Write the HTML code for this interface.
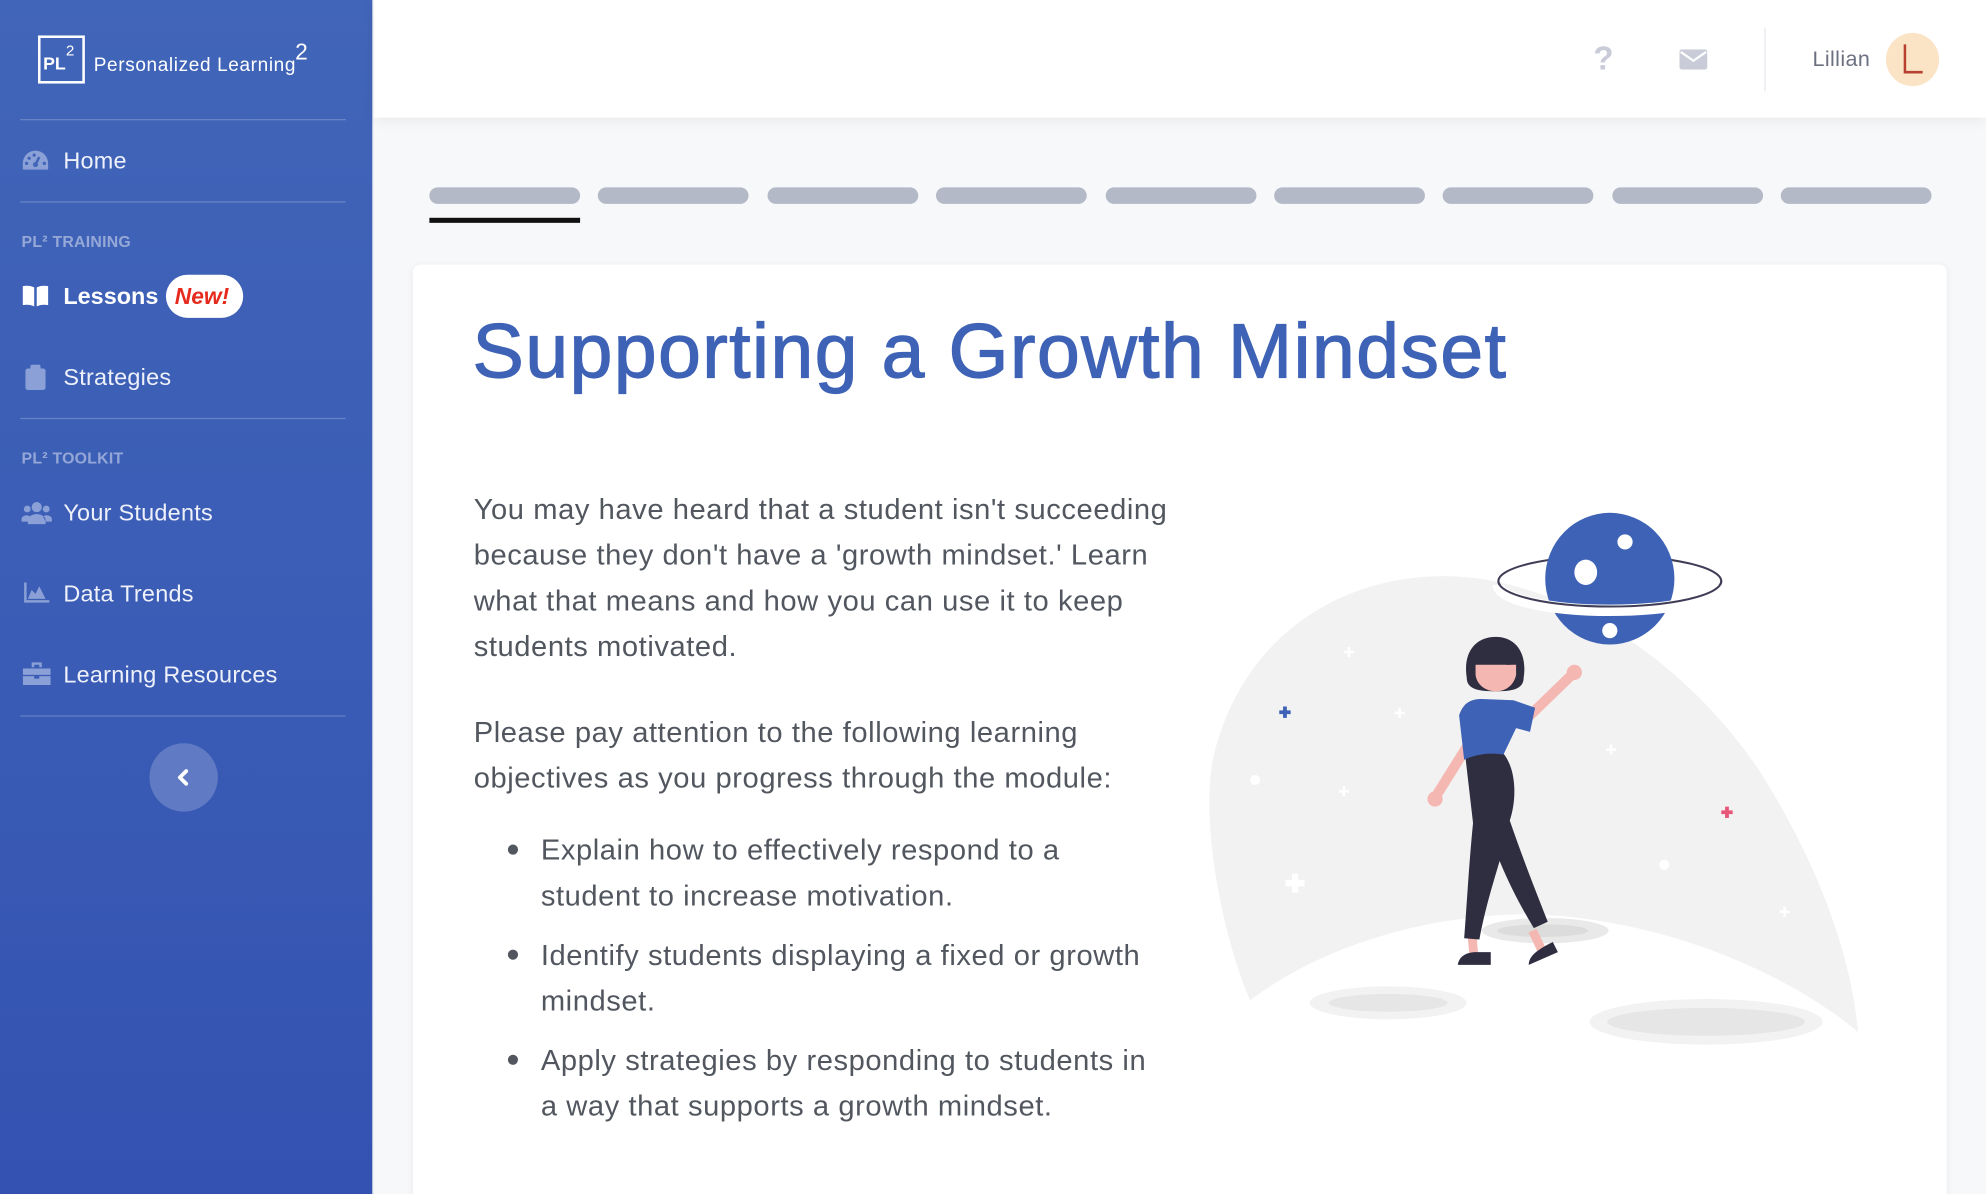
<!DOCTYPE html>
<html><head><meta charset="utf-8">
<style>
html,body{margin:0;padding:0;width:1986px;height:1194px;overflow:hidden;background:#f7f8fa;}
#w{position:absolute;left:0;top:0;width:1568px;height:943px;transform:scale(1.26658,1.2662);transform-origin:0 0;font-family:"Liberation Sans",sans-serif;background:#f7f8fa;overflow:hidden;}
.abs{position:absolute;}
#side{left:0;top:0;width:294px;height:943px;background:linear-gradient(180deg,#4165b8 0%,#3b5db6 50%,#3452b1 100%);border-right:1px solid #e8eaf0;}
.hr{position:absolute;left:16px;width:257px;height:1px;background:rgba(255,255,255,0.22);}
.nav{position:absolute;left:50px;font-size:18.5px;color:#eef1fa;line-height:20px;letter-spacing:0.2px;}
.ico{position:absolute;left:17px;}
.sec{position:absolute;left:17px;font-size:12.5px;font-weight:bold;color:rgba(255,255,255,0.45);letter-spacing:0.2px;}
#hdr{left:295px;top:0;width:1273px;height:93px;background:#fff;box-shadow:0 3px 10px rgba(0,0,0,0.06);}
.bar{position:absolute;top:148px;width:119px;height:13px;border-radius:7px;background:#b3b9c6;}
#card{left:326px;top:209px;width:1211px;height:760px;background:#fff;border-radius:6px;box-shadow:0 1px 6px rgba(0,0,0,0.06);}
.p{position:absolute;left:374px;font-size:23px;letter-spacing:0.45px;line-height:36px;color:#52575f;}
.dot{position:absolute;left:401px;width:8px;height:8px;border-radius:50%;background:#52575f;}
</style></head><body>
<div id="w">
<div id="side" class="abs">
  <div class="abs" style="left:30px;top:28px;width:33px;height:34px;border:2px solid #fff;"></div>
  <div class="abs" style="left:34px;top:42px;font-size:14px;font-weight:bold;color:#fff;">PL</div>
  <div class="abs" style="left:52px;top:33px;font-size:12px;color:#fff;">2</div>
  <div class="abs" style="left:74px;top:43px;font-size:15px;letter-spacing:0.5px;color:#fff;">Personalized Learning</div>
  <div class="abs" style="left:233px;top:31px;font-size:18px;color:#fff;">2</div>
  <div class="hr" style="top:94px"></div>
  <svg class="ico" style="top:118px" width="22" height="18" viewBox="0 0 22 18"><path d="M11 1A10 10 0 0 0 1 11v5h20v-5A10 10 0 0 0 11 1z" fill="#8aa0d6"/><path d="M11 12l3-6" stroke="#4165b8" stroke-width="2"/><circle cx="11" cy="12" r="2" fill="#4165b8"/><circle cx="6" cy="7" r="1.3" fill="#4165b8"/><circle cx="4" cy="11" r="1.3" fill="#4165b8"/><circle cx="10" cy="4.5" r="1.3" fill="#4165b8"/><circle cx="18" cy="11" r="1.3" fill="#4165b8"/></svg>
  <div class="nav" style="top:117px">Home</div>
  <div class="hr" style="top:159px"></div>
  <div class="sec" style="top:184px">PL² TRAINING</div>
  <svg class="ico" style="top:225px" width="22" height="18" viewBox="0 0 22 18"><path d="M1 1q5-1 9 1v15q-4-2-9-1z M12 2q4-2 9-1v15q-5-1-9 1z" fill="#fff"/></svg>
  <div class="nav" style="top:224px;font-weight:bold;color:#fff;letter-spacing:0;">Lessons</div>
  <div class="abs" style="left:131px;top:217px;width:61px;height:34px;border-radius:17px;background:#fff;"></div>
  <div class="abs" style="left:138px;top:224px;font-size:18px;font-weight:bold;font-style:italic;color:#e62b1e;">New!</div>
  <svg class="ico" style="top:288px;left:20px" width="16" height="20" viewBox="0 0 16 20"><rect x="0" y="3" width="16" height="17" rx="2" fill="#8aa0d6"/><rect x="4" y="0" width="8" height="5" rx="1.5" fill="#8aa0d6"/></svg>
  <div class="nav" style="top:288px">Strategies</div>
  <div class="hr" style="top:330px"></div>
  <div class="sec" style="top:355px">PL² TOOLKIT</div>
  <svg class="ico" style="top:396px" width="24" height="18" viewBox="0 0 24 18"><circle cx="12" cy="4.5" r="4" fill="#8aa0d6"/><circle cx="4.5" cy="6" r="2.7" fill="#8aa0d6"/><circle cx="19.5" cy="6" r="2.7" fill="#8aa0d6"/><path d="M5 18v-3a7 5 0 0 1 14 0v3z M0 14a4 3 0 0 1 7-2l-2 4H0z M24 14a4 3 0 0 0-7-2l2 4h5z" fill="#8aa0d6"/></svg>
  <div class="nav" style="top:395px">Your Students</div>
  <svg class="ico" style="top:460px;left:19px" width="20" height="16" viewBox="0 0 20 16"><path d="M0 0h2v14h18v2H0z M3 13l3-7 3 3 3-6 5 10z" fill="#8aa0d6"/></svg>
  <div class="nav" style="top:459px">Data Trends</div>
  <svg class="ico" style="top:523px;left:18px" width="22" height="18" viewBox="0 0 22 18"><path d="M7 0h8v4h-2V2H9v2H7z M0 5h22v5H0z M0 11h9v2h4v-2h9v7H0z" fill="#8aa0d6"/></svg>
  <div class="nav" style="top:523px">Learning Resources</div>
  <div class="hr" style="top:565px"></div>
  <div class="abs" style="left:118px;top:587px;width:54px;height:54px;border-radius:50%;background:rgba(255,255,255,0.2);"></div>
  <svg class="abs" style="left:139px;top:607px" width="12" height="14" viewBox="0 0 12 14"><path d="M8 2L3 7l5 5" stroke="#fff" stroke-width="3" fill="none" stroke-linecap="round" stroke-linejoin="round"/></svg>
</div>
<div id="hdr" class="abs"></div>
<div class="abs" style="left:1258px;top:31px;font-size:26px;font-weight:bold;color:#c9ccd8;">?</div>
<svg class="abs" style="left:1326px;top:39px" width="22" height="16" viewBox="0 0 22 16"><rect width="22" height="16" rx="2" fill="#c9ccd8"/><path d="M1 2l10 7 10-7" stroke="#fff" stroke-width="1.8" fill="none"/></svg>
<div class="abs" style="left:1393px;top:22px;width:1px;height:50px;background:#e6e8ee;"></div>
<div class="abs" style="left:1431px;top:37px;font-size:17px;letter-spacing:0.3px;color:#6c7080;">Lillian</div>
<div class="abs" style="left:1489px;top:26px;width:42px;height:42px;border-radius:50%;background:#fbe4c6;"></div>
<svg class="abs" style="left:1502px;top:34px" width="18" height="26" viewBox="0 0 18 26"><path d="M2 1V23H16" stroke="#b84030" stroke-width="2" fill="none"/></svg>

<div class="bar" style="left:339px"></div>
<div class="bar" style="left:472px"></div>
<div class="bar" style="left:606px"></div>
<div class="bar" style="left:739px"></div>
<div class="bar" style="left:873px"></div>
<div class="bar" style="left:1006px"></div>
<div class="bar" style="left:1139px"></div>
<div class="bar" style="left:1273px"></div>
<div class="bar" style="left:1406px"></div>
<div class="abs" style="left:339px;top:172px;width:119px;height:4px;background:#111;"></div>

<div id="card" class="abs"></div>
<div class="abs" style="left:373px;top:242px;font-size:61px;color:#3e62b5;-webkit-text-stroke:0.9px #3e62b5;letter-spacing:1px;white-space:nowrap;">Supporting a Growth Mindset</div>
<div class="p" style="top:384px;white-space:nowrap;">You may have heard that a student isn't succeeding<br>because they don't have a 'growth mindset.' Learn<br>what that means and how you can use it to keep<br>students motivated.</div>
<div class="p" style="top:560px;white-space:nowrap;">Please pay attention to the following learning<br>objectives as you progress through the module:</div>
<div class="dot" style="top:667px"></div>
<div class="p" style="left:427px;top:653px;white-space:nowrap;">Explain how to effectively respond to a<br>student to increase motivation.</div>
<div class="dot" style="top:750px"></div>
<div class="p" style="left:427px;top:736px;white-space:nowrap;">Identify students displaying a fixed or growth<br>mindset.</div>
<div class="dot" style="top:833px"></div>
<div class="p" style="left:427px;top:819px;white-space:nowrap;">Apply strategies by responding to students in<br>a way that supports a growth mindset.</div>

<svg class="abs" style="left:0;top:0" width="1568" height="943" viewBox="0 0 1568 943">
  <path d="M987 790 C965 740 945 640 960 590 C985 500 1060 455 1140 455 C1230 455 1330 520 1390 610 C1440 690 1462 760 1467 815 C1400 760 1300 725 1210 722 C1120 722 1040 750 987 790 Z" fill="#f2f2f2"/>
  <ellipse cx="1096" cy="792" rx="62" ry="13" fill="#f2f2f2"/><ellipse cx="1096" cy="792" rx="47" ry="7" fill="#e6e6e6"/>
  <ellipse cx="1347" cy="807" rx="92" ry="18" fill="#f2f2f2"/><ellipse cx="1347" cy="807" rx="78" ry="11" fill="#e6e6e6"/>
  <ellipse cx="1220" cy="735" rx="50" ry="10" fill="#e9e9e9"/><ellipse cx="1218" cy="735" rx="36" ry="5" fill="#dcdcdc"/>
  <g fill="#fff"><circle cx="991" cy="616" r="4"/><circle cx="1314" cy="683" r="4"/><path d="M1064 511h2v3h3v2h-3v3h-2v-3h-3v-2h3z"/><path d="M1104 559h2v3h3v2h-3v3h-2v-3h-3v-2h3z"/><path d="M1060 621h2v3h3v2h-3v3h-2v-3h-3v-2h3z"/><path d="M1271 588h2v3h3v2h-3v3h-2v-3h-3v-2h3z"/><path d="M1408 716h2v3h3v2h-3v3h-2v-3h-3v-2h3z"/><path d="M1020 690h5v5h5v5h-5v5h-5v-5h-5v-5h5z"/></g>
  <path d="M1013 558h3v3h3v3h-3v3h-3v-3h-3v-3h3z" fill="#3e62b5"/>
  <path d="M1362 637h3v3h3v3h-3v3h-3v-3h-3v-3h3z" fill="#e8577a"/>
  <ellipse cx="1271" cy="459" rx="88" ry="20" stroke="#3f3d56" stroke-width="1.6" fill="none"/>
  <ellipse cx="1271" cy="457" rx="51" ry="52" fill="#3e62b5"/>
  <circle cx="1283" cy="428" r="6" fill="#fff"/><ellipse cx="1252" cy="452" rx="9" ry="10" fill="#fff"/><circle cx="1271" cy="498" r="6" fill="#fff"/>
  <path d="M1183 462 A88 20 0 0 0 1359 462" stroke="#fff" stroke-width="9" fill="none"/>
  <path d="M1183 459 A88 20 0 0 0 1359 459" stroke="#3f3d56" stroke-width="1.6" fill="none"/>
  <!-- woman -->
  <path d="M1208 565 L1242 532" stroke="#f5b7b1" stroke-width="8" stroke-linecap="round"/>
  <circle cx="1243" cy="531" r="6" fill="#f5b7b1"/>
  <path d="M1158 590 L1133 630" stroke="#f5b7b1" stroke-width="8" stroke-linecap="round"/>
  <circle cx="1133" cy="631" r="6" fill="#f5b7b1"/>
  <path d="M1162 735 L1164 760 M1210 735 L1218 752" stroke="#f5b7b1" stroke-width="7"/>
  <path d="M1157 598 C1170 593 1182 592 1186 594 C1197 606 1198 630 1192 648 C1203 680 1213 705 1222 728 L1211 733 C1200 715 1191 697 1184 680 C1178 700 1172 720 1168 742 L1156 741 C1158 715 1160 680 1163 650 Z" fill="#2f2e41"/>
  <path d="M1151 762 C1152 755 1158 752 1166 752 L1177 752 L1177 762 Z M1207 762 C1207 755 1214 750 1226 744 L1230 752 Z" fill="#2f2e41"/>
  <path d="M1152 565 C1155 556 1160 552 1170 552 L1195 553 L1212 559 L1208 578 L1197 575 L1187 596 C1175 594 1165 596 1156 600 Z" fill="#3e62b5"/>
  <path d="M1158 535 C1155 515 1165 503 1181 503 C1196 503 1206 515 1203 535 C1203 544 1195 546 1181 546 C1166 546 1158 544 1158 535 Z" fill="#2f2e41"/>
  <path d="M1165 525 L1197 525 L1197 533 C1195 542 1188 546 1181 546 C1173 546 1166 541 1165 533 Z" fill="#f5b7b1"/>
  <path d="M1190 515 L1193 525 L1189 525 Z" fill="#2f2e41"/>
</svg>
</div>
</body></html>
